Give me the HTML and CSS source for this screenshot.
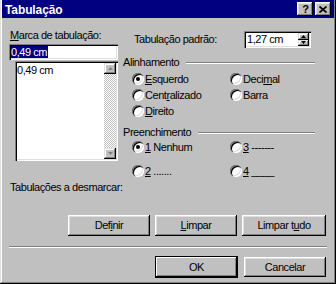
FILE: index.html
```html
<!DOCTYPE html>
<html lang="pt">
<head>
<meta charset="utf-8">
<title>Tabulação</title>
<link rel="stylesheet" href="styles.css">
</head>
<body>
<div class="window">
  <div class="titlebar">
    <span class="title">Tabulação</span>
    <div class="tbtns">
      <span class="tbtn help">?</span>
      <span class="tbtn close"><svg width="8" height="7" viewBox="0 0 8 7"><path d="M0.5 0.5L7.5 6.5M7.5 0.5L0.5 6.5" stroke="#000" stroke-width="1.7"/></svg></span>
    </div>
  </div>

  <div class="main">
    <div class="left">
      <div class="lbl"><u>M</u>arca de tabulação:</div>
      <div class="field"><span class="sel">0,49 cm</span></div>
      <div class="listbox">
        <div class="items"><div class="item">0,49 cm</div></div>
        <div class="vscroll">
          <div class="sbtn"><svg width="5" height="3" viewBox="0 0 5 3"><path d="M2.5 0L5 3H0z" fill="#808080"/></svg></div>
          <div class="track"></div>
          <div class="sbtn"><svg width="5" height="3" viewBox="0 0 5 3"><path d="M0 0H5L2.5 3z" fill="#808080"/></svg></div>
        </div>
      </div>
    </div>

    <div class="right">
      <div class="deftab">
        <span class="deflbl">Tabulação padrão:</span>
        <div class="spin">
          <span class="spintext">1,27 cm</span>
          <div class="spinbtns">
            <div class="sp"><svg width="5" height="3" viewBox="0 0 5 3"><path d="M2.5 0L5 3H0z" fill="#000"/></svg></div>
            <div class="sp"><svg width="5" height="3" viewBox="0 0 5 3"><path d="M0 0H5L2.5 3z" fill="#000"/></svg></div>
          </div>
        </div>
      </div>

      <div class="ghead head-align"><span>Alinhamento</span><i class="groove"></i></div>
      <div class="radios align">
        <div class="opt"><span class="radio on"></span><span class="otext"><u>E</u>squerdo</span></div>
        <div class="opt"><span class="radio"></span><span class="otext">Deci<u>m</u>al</span></div>
        <div class="opt"><span class="radio"></span><span class="otext">Cent<u>r</u>alizado</span></div>
        <div class="opt"><span class="radio"></span><span class="otext">Barra</span></div>
        <div class="opt"><span class="radio"></span><span class="otext"><u>D</u>ireito</span></div>
      </div>

      <div class="ghead head-fill"><span>Preenchimento</span><i class="groove"></i></div>
      <div class="radios fill">
        <div class="opt"><span class="radio on"></span><span class="otext"><u>1</u> Nenhum</span></div>
        <div class="opt"><span class="radio"></span><span class="otext"><u>3</u> -------</span></div>
        <div class="opt"><span class="radio"></span><span class="otext"><u>2</u> .......</span></div>
        <div class="opt"><span class="radio"></span><span class="otext"><u>4</u> ____</span></div>
      </div>
    </div>
  </div>

  <div class="clearlbl">Tabulações a desmarcar:</div>

  <div class="btnrow">
    <span class="btn">Def<u>i</u>nir</span>
    <span class="btn"><u>L</u>impar</span>
    <span class="btn wide">Limpar t<u>u</u>do</span>
  </div>

  <div class="sep"></div>

  <div class="btnrow bottom">
    <span class="btn default">OK</span>
    <span class="btn cancel">Cancelar</span>
  </div>
</div>
</body>
</html>
```

FILE: styles.css
```css
* { box-sizing: border-box; }

html, body {
  margin: 0;
  padding: 0;
  background: #c0c0c0;
}

body {
  font-family: "Liberation Sans", Arial, sans-serif;
  font-size: 11px;
  letter-spacing: -0.45px;
  color: #000;
}

u { text-decoration: underline; text-underline-offset: 1px; }

.window {
  width: 336px;
  height: 284px;
  padding: 0 2px 2px 2px;
  background: #c0c0c0;
  box-shadow: inset -1px -1px 0 #000, inset 1px 0 0 #dfdfdf, inset -2px -2px 0 #808080, inset 2px 0 0 #fff;
  overflow: hidden;
}

.titlebar {
  height: 18px;
  background: #000080;
  display: flex;
  align-items: center;
  justify-content: space-between;
  padding: 0 3px 0 3px;
}

.title {
  color: #fff;
  font-weight: bold;
  font-size: 12px;
  letter-spacing: -0.1px;
  line-height: 18px;
  padding-top: 1px;
}

.tbtns {
  display: flex;
  gap: 2px;
}

.tbtn {
  width: 16px;
  height: 14px;
  background: #c0c0c0;
  box-shadow: inset -1px -1px 0 #000, inset 1px 1px 0 #fff, inset -2px -2px 0 #808080, inset 2px 2px 0 #dfdfdf;
  display: flex;
  align-items: center;
  justify-content: center;
}

.help {
  font-weight: bold;
  font-size: 11px;
  line-height: 14px;
  letter-spacing: 0;
  padding-left: 1px;
}

.close svg { display: block; margin-top: 0; }

.main {
  display: flex;
  padding-top: 11px;
}

.left {
  width: 109px;
  margin-left: 7px;
  display: flex;
  flex-direction: column;
}

.lbl {
  margin-left: 1px;
  line-height: 13px;
  height: 13px;
  white-space: nowrap;
}

.field {
  margin-top: 2px;
  height: 16px;
  width: 109px;
  background: #fff;
  padding: 2px 2px 2px 2px;
  box-shadow: inset 1px 1px 0 #808080, inset 2px 2px 0 #000, inset -1px -1px 0 #fff, inset -2px -2px 0 #dfdfdf;
  line-height: 12px;
  white-space: nowrap;
}

.sel {
  background: #000080;
  color: #fff;
  padding-right: 1px;
}

.listbox {
  margin-top: 1px;
  margin-left: 6px;
  width: 103px;
  height: 100px;
  background: #fff;
  padding: 2px;
  box-shadow: inset 1px 1px 0 #808080, inset 2px 2px 0 #000, inset -1px -1px 0 #fff, inset -2px -2px 0 #dfdfdf;
  display: flex;
}

.items {
  flex: 1;
  padding-top: 1px;
}

.item {
  line-height: 13px;
  white-space: nowrap;
}

.vscroll {
  width: 12px;
  display: flex;
  flex-direction: column;
}

.sbtn {
  height: 11px;
  background: #c0c0c0;
  box-shadow: inset -1px -1px 0 #000, inset 1px 1px 0 #dfdfdf, inset -2px -2px 0 #808080, inset 2px 2px 0 #fff;
  display: flex;
  align-items: center;
  justify-content: center;
}

.sbtn svg { display: block; }

.track {
  flex: 1;
  background: repeating-conic-gradient(#fff 0 25%, #c0c0c0 0 50%) 0 0 / 2px 2px;
}

.right {
  width: 192px;
  margin-left: 5px;
  display: flex;
  flex-direction: column;
}

.deftab {
  margin-top: 2px;
  height: 17px;
  display: flex;
  align-items: center;
}

.deflbl {
  margin-left: 11px;
  width: 110px;
  line-height: 17px;
  white-space: nowrap;
}

.spin {
  width: 67px;
  height: 17px;
  background: #fff;
  padding: 2px;
  box-shadow: inset 1px 1px 0 #808080, inset 2px 2px 0 #000, inset -1px -1px 0 #fff, inset -2px -2px 0 #dfdfdf;
  display: flex;
  align-items: center;
}

.spintext {
  flex: 1;
  padding-left: 1px;
  line-height: 13px;
  white-space: nowrap;
}

.spinbtns {
  width: 11px;
  height: 13px;
  display: flex;
  flex-direction: column;
}

.sp {
  flex: 1;
  background: #c0c0c0;
  box-shadow: inset -1px -1px 0 #000, inset 1px 1px 0 #dfdfdf, inset -2px -2px 0 #808080, inset 2px 2px 0 #fff;
  display: flex;
  align-items: center;
  justify-content: center;
}

.sp svg { display: block; }

.ghead {
  height: 13px;
  line-height: 13px;
  display: flex;
  align-items: center;
  white-space: nowrap;
}

.head-align { margin-top: 8px; }
.head-fill { margin-top: 7px; }

.groove {
  flex: 1;
  height: 2px;
  margin-left: 7px;
  border-top: 1px solid #808080;
  border-bottom: 1px solid #fff;
}

.radios {
  display: grid;
  grid-template-columns: 98px auto;
  grid-auto-rows: 16px;
  padding-left: 9px;
}

.radios.align { margin-top: 2px; }
.radios.fill { row-gap: 8px; }

.opt {
  display: flex;
  align-items: center;
  white-space: nowrap;
}

.radio {
  position: relative;
  flex: none;
  width: 12px;
  height: 12px;
  border-radius: 50%;
  background: #fff;
  box-shadow: inset 1px 1px 0 #808080, inset 2px 2px 0 #000, inset -1px -1px 0 #fff, inset -2px -2px 0 #dfdfdf;
}

.radio.on::after {
  content: "";
  position: absolute;
  left: 4px;
  top: 4px;
  width: 4px;
  height: 4px;
  border-radius: 50%;
  background: #000;
}

.otext {
  margin-left: 1px;
  line-height: 13px;
}

.clearlbl {
  margin-top: 2px;
  padding-left: 8px;
  line-height: 13px;
  height: 13px;
}

.btnrow {
  margin-top: 21px;
  display: flex;
  justify-content: flex-end;
  gap: 5px;
  padding-right: 8px;
}

.btn {
  width: 82px;
  height: 21px;
  line-height: 21px;
  text-align: center;
  background: #c0c0c0;
  box-shadow: inset -1px -1px 0 #000, inset 1px 1px 0 #fff, inset -2px -2px 0 #808080, inset 2px 2px 0 #dfdfdf;
  white-space: nowrap;
}

.btn.wide { width: 84px; }

.sep {
  margin: 10px 7px 0 7px;
  height: 2px;
  border-top: 1px solid #808080;
  border-bottom: 1px solid #fff;
}

.btnrow.bottom {
  margin-top: 8px;
  gap: 6px;
  align-items: center;
}

.btn.default {
  width: 83px;
  height: 22px;
  line-height: 22px;
  box-shadow: inset 0 0 0 1px #000, inset -2px -2px 0 #000, inset 2px 2px 0 #fff, inset -3px -3px 0 #808080;
}

.btn.cancel {
  height: 20px;
  line-height: 20px;
}
```
